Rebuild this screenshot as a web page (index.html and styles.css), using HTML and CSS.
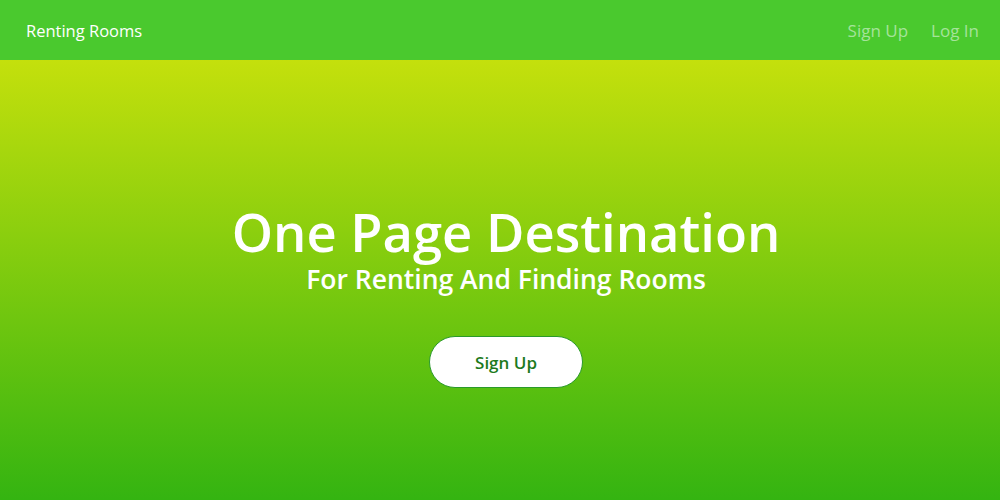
FILE: index.html
```html
<!DOCTYPE html>
<html>
<head>
<meta charset="utf-8">
<link rel="stylesheet" href="styles.css">
</head>
<body>
<nav class="navbar">
  <a class="brand" href="#">Renting Rooms</a>
  <div class="links">
    <a href="#">Sign Up</a>
    <a href="#">Log In</a>
  </div>
</nav>
<header class="hero">
  <h1 class="title">One Page Destination</h1>
  <h2 class="subtitle">For Renting And Finding Rooms</h2>
  <a class="cta" href="#">Sign Up</a>
</header>
</body>
</html>
```
FILE: styles.css
```css
* { box-sizing: border-box; }
html, body { margin: 0; padding: 0; }
body {
  font-family: "Open Sans", "Noto Sans", sans-serif;
  width: 1000px;
  height: 500px;
  overflow: hidden;
}
a { text-decoration: none; }
.navbar {
  height: 60px;
  background: #4ac92e;
  display: flex;
  align-items: center;
  justify-content: space-between;
  padding: 0 21px 0 26px;
}
.brand {
  color: #ffffff;
  font-size: 16.5px;
}
.links {
  display: flex;
  gap: 23px;
}
.links a {
  color: #a5e39a;
  font-size: 17px;
}
.hero {
  height: 440px;
  background: linear-gradient(to bottom, #c4e00c 0%, #34b411 100%);
  display: flex;
  flex-direction: column;
  align-items: center;
  padding-top: 140px;
  padding-left: 12px;
  color: #fff;
}
.title {
  margin: 0;
  font-size: 52.5px;
  font-weight: 600;
  line-height: 64px;
}
.subtitle {
  margin: 0;
  font-size: 26.5px;
  font-weight: 600;
  line-height: 30px;
}
.cta {
  margin-top: 42px;
  width: 154px;
  height: 52px;
  border-radius: 26px;
  background: #fff;
  border: 1px solid #2a9a2a;
  color: #1d7a1d;
  font-size: 17px;
  font-weight: 600;
  display: flex;
  align-items: center;
  justify-content: center;
}
```
